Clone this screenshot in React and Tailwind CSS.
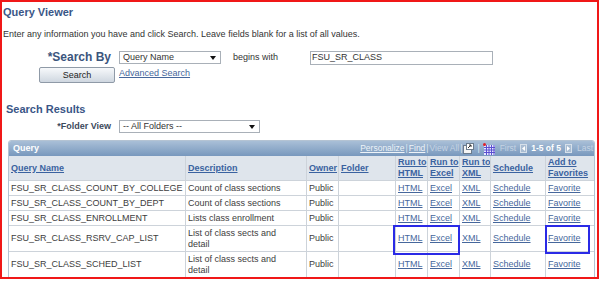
import React from 'react'

const rows = [
  { name: 'FSU_SR_CLASS_COUNT_BY_COLLEGE', desc: ['Count of class sections'], h: 'h-[15px]' },
  { name: 'FSU_SR_CLASS_COUNT_BY_DEPT', desc: ['Count of class sections'], h: 'h-[15px]' },
  { name: 'FSU_SR_CLASS_ENROLLMENT', desc: ['Lists class enrollment'], h: 'h-[15px]' },
  { name: 'FSU_SR_CLASS_RSRV_CAP_LIST', desc: ['List of class sects and', 'detail'], h: 'h-[26px]' },
  { name: 'FSU_SR_CLASS_SCHED_LIST', desc: ['List of class sects and', 'detail'], h: 'h-[25px]' },
]

function Arrow() {
  return (
    <svg width="6" height="4" viewBox="0 0 6 4" className="shrink-0">
      <path d="M0 0h6L3 4z" fill="#111" />
    </svg>
  )
}

function Select({ w, label }) {
  return (
    <div className={`${w} h-[13px] border border-[#a9b0b8] bg-white flex items-center justify-between pl-[3px] pr-[4px] text-[9px] leading-[11px] text-[#333]`}>
      <span>{label}</span>
      <Arrow />
    </div>
  )
}

function ZoomIcon() {
  return (
    <svg width="11" height="11" viewBox="0 0 11 11" className="shrink-0">
      <rect x="0.5" y="2.5" width="8" height="8" fill="#f4f4f4" stroke="#6b7b8c" />
      <rect x="3.5" y="0.5" width="7" height="6" fill="#fff" stroke="#6b7b8c" />
      <path d="M5 5l3-3M6 2h2v2" stroke="#333" strokeWidth="1" fill="none" />
    </svg>
  )
}

function GridIcon() {
  return (
    <svg width="12" height="12" viewBox="0 0 12 12" className="shrink-0">
      <rect x="1" y="2" width="11" height="10" fill="#e8e8ff" />
      <path d="M1 4.5h11M1 7h11M1 9.5h11M3.5 2v10M6 2v10M8.5 2v10M11 2v10" stroke="#5b4fd1" strokeWidth="1" />
      <circle cx="1.5" cy="1.5" r="1.5" fill="#e0202a" />
    </svg>
  )
}

function NavBtn({ dir }) {
  return (
    <span className="w-[7px] h-[9px] bg-[#a9bdd3] border border-[#d6e0ea] flex items-center justify-center shrink-0">
      <svg width="3" height="5" viewBox="0 0 3 5">
        {dir === 'l' ? <path d="M3 0v5L0 2.5z" fill="#fff" /> : <path d="M0 0v5l3-2.5z" fill="#fff" />}
      </svg>
    </span>
  )
}

const cols = ['w-[177px]', 'w-[121px]', 'w-[32px]', 'w-[57px]', 'w-[32px]', 'w-[32px]', 'w-[31px]', 'w-[55px]', 'w-[48px]']

function Cell({ i, children, last }) {
  return (
    <div className={`${cols[i]} h-full shrink-0 flex items-center pl-[2px] whitespace-nowrap overflow-hidden ${last ? '' : 'border-r border-[#cdd3da]'}`}>
      {children}
    </div>
  )
}

const link = 'underline text-[#46679c]'
const head = 'font-bold underline text-[#3a62a0] leading-[11px]'

export default function App() {
  return (
    <div className="w-[600px] h-[281px] bg-white font-['Liberation_Sans',Arial,sans-serif]">
      <div className="relative w-[599px] h-[279px] border-2 border-[#f01818] pl-[1px] overflow-hidden">
        <div className="mt-[4px] text-[11px] leading-[13px] font-bold text-[#3a5687]">Query Viewer</div>
        <div className="mt-[10px] text-[9px] leading-[11px] text-[#333]">
          Enter any information you have and click Search. Leave fields blank for a list of all values.
        </div>

        <div className="mt-[11px] flex items-center h-[13px]">
          <div className="w-[116px] pr-[8px] text-right text-[12px] leading-[13px] font-bold text-[#3b557d]">*Search By</div>
          <Select w="w-[102px]" label="Query Name" />
          <span className="ml-[12px] w-[77px] text-[9px] leading-[11px] text-[#333]">begins with</span>
          <div className="w-[183px] h-[14px] border border-[#a9b0b8] flex items-center pl-[1px] text-[9px] leading-[11px] text-[#333]">
            FSU_SR_CLASS
          </div>
        </div>

        <div className="mt-[3px] flex items-start">
          <div className="ml-[36px] w-[76px] h-[16px] rounded-[2px] border border-[#8f9aa7] bg-gradient-to-b from-[#f7f9fb] to-[#cfd7e0] flex items-center justify-center text-[9px] leading-[11px] text-[#222]">
            Search
          </div>
          <span className="ml-[4px] mt-[1px] text-[9px] leading-[11px] underline text-[#46679c]">Advanced Search</span>
        </div>

        <div className="mt-[20px] pl-[3px] text-[11px] leading-[13px] font-bold text-[#3a5687]">Search Results</div>

        <div className="mt-[4px] flex items-center h-[13px]">
          <div className="w-[116px] pr-[8px] text-right text-[9px] leading-[11px] font-bold text-[#3d4a5c]">*Folder View</div>
          <Select w="w-[141px]" label="-- All Folders --" />
        </div>

        <div className="mt-[7px] ml-[5px] w-[587px] border border-[#b4c3d3] rounded-t-[3px] text-[9px] leading-[11px]">
          <div className="h-[15px] bg-gradient-to-b from-[#a9bfd7] to-[#7898bd] flex items-center pl-[4px] pr-[1px] rounded-t-[2px]">
            <span className="font-bold text-white">Query</span>
            <div className="ml-auto flex items-center whitespace-nowrap text-[8.5px] text-[#eef3f8]">
              <span className="underline">Personalize</span>
              <span className="mx-[1px] text-[#dce6f0]">|</span>
              <span className="underline">Find</span>
              <span className="mx-[1px] text-[#dce6f0]">|</span>
              <span className="text-[#c5d3e3]">View All</span>
              <span className="mx-[1px] text-[#dce6f0]">|</span>
              <ZoomIcon />
              <span className="mx-[3px] text-[#dce6f0]">|</span>
              <GridIcon />
              <span className="ml-[5px] text-[#c5d3e3]">First</span>
              <span className="ml-[4px]"><NavBtn dir="l" /></span>
              <span className="ml-[4px] font-bold text-white">1-5 of 5</span>
              <span className="ml-[4px]"><NavBtn dir="r" /></span>
              <span className="ml-[5px] text-[#c5d3e3]">Last</span>
            </div>
          </div>

          <div className="h-[25px] flex bg-[#dfe5ec] border-b border-[#cdd3da]">
            <Cell i={0}><span className={head}>Query Name</span></Cell>
            <Cell i={1}><span className={head}>Description</span></Cell>
            <Cell i={2}><span className={head}>Owner</span></Cell>
            <Cell i={3}><span className={head}>Folder</span></Cell>
            <Cell i={4}><span className={head}>Run to<br />HTML</span></Cell>
            <Cell i={5}><span className={head}>Run to<br />Excel</span></Cell>
            <Cell i={6}><span className={head}>Run to<br />XML</span></Cell>
            <Cell i={7}><span className={head}>Schedule</span></Cell>
            <Cell i={8} last><span className={head}>Add to<br />Favorites</span></Cell>
          </div>

          {rows.map((r, idx) => (
            <div key={r.name} className={`${r.h} flex text-[#3d3d3d] ${idx < rows.length - 1 ? 'border-b border-[#cdd3da]' : ''}`}>
              <Cell i={0}>{r.name}</Cell>
              <Cell i={1}>
                <span>
                  {r.desc.map((d, k) => (
                    <React.Fragment key={k}>
                      {k > 0 && <br />}
                      {d}
                    </React.Fragment>
                  ))}
                </span>
              </Cell>
              <Cell i={2}>Public</Cell>
              <Cell i={3}></Cell>
              <Cell i={4}><span className={link}>HTML</span></Cell>
              <Cell i={5}><span className={link}>Excel</span></Cell>
              <Cell i={6}><span className={link}>XML</span></Cell>
              <Cell i={7}><span className={link}>Schedule</span></Cell>
              <Cell i={8} last><span className={link}>Favorite</span></Cell>
            </div>
          ))}
        </div>

        <div className="absolute left-[391px] top-[223px] w-[67px] h-[30px] border-2 border-[#2a2ae6]" />
        <div className="absolute left-[543px] top-[223px] w-[45px] h-[29px] border-2 border-[#2a2ae6]" />
      </div>
    </div>
  )
}
